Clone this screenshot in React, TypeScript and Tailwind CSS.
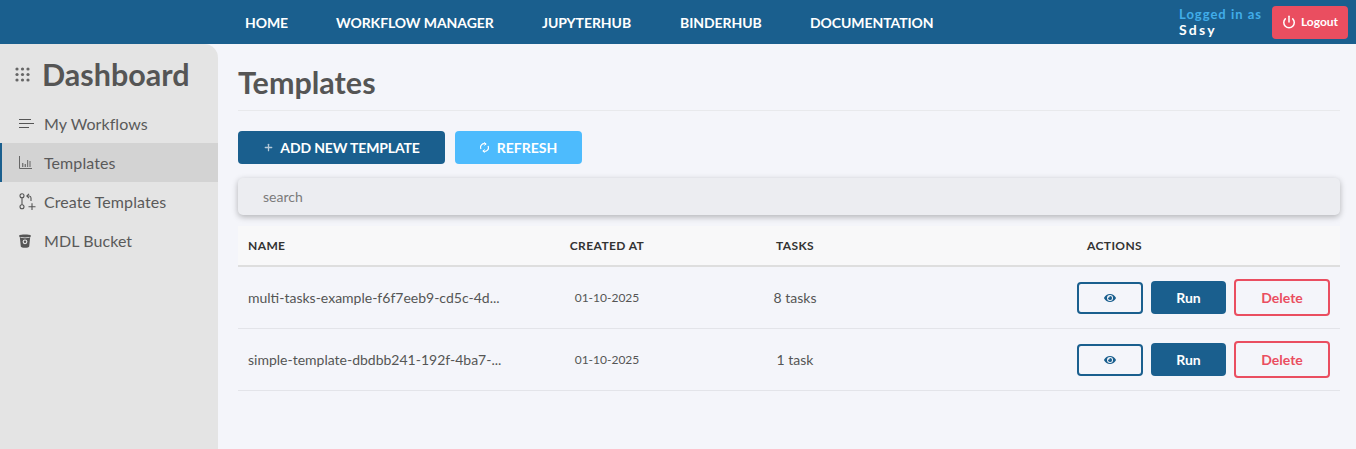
import React from "react";
import { Power, Plus } from "lucide-react";
import { FaEye } from "react-icons/fa";

const nav = [
  ["HOME", "w-[91px]"],
  ["WORKFLOW MANAGER", "w-[206px]"],
  ["JUPYTERHUB", "w-[138px]"],
  ["BINDERHUB", "w-[130px]"],
  ["DOCUMENTATION", "w-[140px]"],
];

const Dots = () => (
  <svg width="15" height="15" viewBox="0 0 15 15" fill="#666">
    {[2, 7.5, 13].flatMap((y) =>
      [2, 7.5, 13].map((x) => <circle key={`${x}-${y}`} cx={x} cy={y} r="1.6" />)
    )}
  </svg>
);

const Lines = () => (
  <svg width="15" height="12" viewBox="0 0 15 12" stroke="#555" strokeWidth="1" fill="none">
    <path d="M0 1.5h12M0 5.5h15M0 9.5h10" />
  </svg>
);

const Chart = () => (
  <svg width="13" height="13" viewBox="0 0 13 13" fill="none">
    <path d="M.5 0v12.5H13" stroke="#666" strokeWidth="1" />
    <path d="M3 7h1.4v4H3zM5.6 8h1.4v3H5.6zM8 4h1.2v7H8zM10.4 5h1.2v6h-1.2z" fill="#777" />
  </svg>
);

const CreateIcon = () => (
  <svg width="17" height="17" viewBox="0 0 17 17" fill="none" stroke="#555" strokeWidth="1.1">
    <circle cx="3" cy="2.8" r="2" />
    <circle cx="3" cy="13.8" r="2" />
    <path d="M3 4.8v7" />
    <path d="M8 3h2.2c1.2 0 1.8.8 1.8 2v3" />
    <path d="M10 .8 7.8 3 10 5.2" />
    <path d="M9.5 13.8h7M13 10.3v7" />
  </svg>
);

const Bucket = () => (
  <svg width="12" height="14" viewBox="0 0 12 14" fill="#555">
    <path d="M0 1.8C0 .2 12 .2 12 1.8c0 .5-.3 1-.8 1.2L10.2 12.4C10 14.2 2 14.2 1.8 12.4L.8 3C.3 2.8 0 2.3 0 1.8z" />
    <path d="M1.4 3.1c2.5.5 6.7.5 9.2 0l-.1.7c-2.5.5-6.5.5-9 0z" fill="#e4e4e4" />
    <circle cx="6" cy="7.8" r="2.4" fill="#e4e4e4" />
    <circle cx="6" cy="7.8" r="1.2" fill="#555" />
  </svg>
);

const Sync = () => (
  <svg width="9" height="11" viewBox="0 0 9 11" fill="none" stroke="white" strokeWidth="1.2">
    <path d="M1 7A3.6 3.6 0 0 1 5.6 2" />
    <path d="M8 4A3.6 3.6 0 0 1 3.4 9" />
    <path d="M4.2.4 6.2 2 4.4 3.4M4.8 7.6 2.8 9 4.6 10.6" strokeWidth="1" />
  </svg>
);

const side = [
  { label: "My Workflows", icon: <Lines /> },
  { label: "Templates", icon: <Chart />, active: true },
  { label: "Create Templates", icon: <CreateIcon /> },
  { label: "MDL Bucket", icon: <Bucket /> },
];

const rows = [
  ["multi-tasks-example-f6f7eeb9-cd5c-4d...", "01-10-2025", "8 tasks"],
  ["simple-template-dbdbb241-192f-4ba7-...", "01-10-2025", "1 task"],
];

export default function App() {
  return (
    <div className="w-[1356px] h-[449px] overflow-hidden flex flex-col bg-[#f4f5fa] font-['Lato',sans-serif]">
      <header className="h-[44px] shrink-0 bg-[#1a5f8e] flex items-center pl-[245px] pr-[8px]">
        <nav className="flex flex-1 items-center">
          {nav.map(([t, w]) => (
            <span key={t} className={`${w} text-[14px] font-bold text-white tracking-[-0.07px]`}>{t}</span>
          ))}
        </nav>
        <div className="w-[93px] flex flex-col text-[13px] leading-[16px] font-bold tracking-[1px] -mt-[1px]">
          <span className="text-[#41ade9] whitespace-nowrap">Logged in as</span>
          <span className="text-white text-[14px] tracking-[2.2px]">Sdsy</span>
        </div>
        <button className="w-[76px] h-[33px] rounded-[4px] bg-[#ea4e60] text-white text-[12px] font-bold flex items-center justify-center gap-[5px]">
          <Power size={14} strokeWidth={2.6} />
          Logout
        </button>
      </header>
      <div className="flex flex-1 min-h-0">
        <aside className="w-[218px] shrink-0 bg-[#e4e4e4] rounded-tr-[14px]">
          <div className="h-[60px] flex items-center pl-[15px] pt-[1px] gap-[12px]">
            <Dots />
            <span className="text-[30.5px] font-bold text-[#555]">Dashboard</span>
          </div>
          <div>
            {side.map((s) => (
              <div
                key={s.label}
                className={`h-[39px] flex items-center border-l-2 ${s.active ? "bg-[#d3d3d3] border-[#1a5f8e]" : "border-transparent"}`}
              >
                <span className="w-[42px] pl-[17px] flex items-center">{s.icon}</span>
                <span className="text-[16px] text-[#5a5a5a] tracking-[0.08px]">{s.label}</span>
              </div>
            ))}
          </div>
        </aside>
        <main className="flex-1 pl-[20px] pr-[16px]">
          <h1 className="h-[67px] border-b border-[#e8e9ec] text-[30.5px] font-bold text-[#555] flex items-center pt-[12px]">Templates</h1>
          <div className="flex gap-[10px] mt-[20px]">
            <button className="w-[207px] h-[33px] rounded-[4px] bg-[#1a5f8e] text-white text-[14px] font-bold flex items-center justify-center gap-[6px]">
              <Plus size={11} strokeWidth={2.8} color="#b5c9d8" />
              <span className="tracking-[-0.15px]">ADD NEW TEMPLATE</span>
            </button>
            <button className="w-[127px] h-[33px] rounded-[4px] bg-[#4dbbfd] text-white text-[14px] font-bold flex items-center justify-center gap-[8px]">
              <Sync />
              REFRESH
            </button>
          </div>
          <div className="h-[37px] mt-[14px] rounded-[5px] bg-[#ecedf1] shadow-[0_2px_6px_rgba(0,0,0,0.28)] flex items-center pl-[25px] text-[14px] text-[#7b7b7b]">
            search
          </div>
          <div className="mt-[11px]">
            <div className="h-[41px] bg-[#f8f8f9] border-b-2 border-[#dedede] flex items-center text-[12px] font-bold text-[#333] tracking-[0.4px]">
              <span className="w-[274px] pl-[10px]">NAME</span>
              <span className="w-[190px] text-center">CREATED AT</span>
              <span className="w-[186px] text-center">TASKS</span>
              <span className="pl-[199px]">ACTIONS</span>
            </div>
            {rows.map(([n, d, t]) => (
              <div key={n} className="h-[62px] border-b border-[#e3e4e9] flex items-center text-[#555]">
                <span className="w-[274px] pl-[10px] text-[14px] whitespace-nowrap">{n}</span>
                <span className="w-[190px] text-center text-[12px]">{d}</span>
                <span className="w-[186px] text-center text-[14px]">{t}</span>
                <div className="flex-1 flex items-center justify-end pr-[10px] gap-[8px]">
                  <button className="w-[66px] h-[32px] rounded-[4px] border-2 border-[#1a5f8e] flex items-center justify-center">
                    <FaEye size={12} color="#1a5f8e" />
                  </button>
                  <button className="w-[75px] h-[33px] rounded-[4px] bg-[#1a5f8e] text-white text-[14px] font-bold">Run</button>
                  <button className="w-[96px] h-[37px] rounded-[4px] border-2 border-[#ea4e60] text-[#ea4e60] text-[14px] font-bold">Delete</button>
                </div>
              </div>
            ))}
          </div>
        </main>
      </div>
    </div>
  );
}
